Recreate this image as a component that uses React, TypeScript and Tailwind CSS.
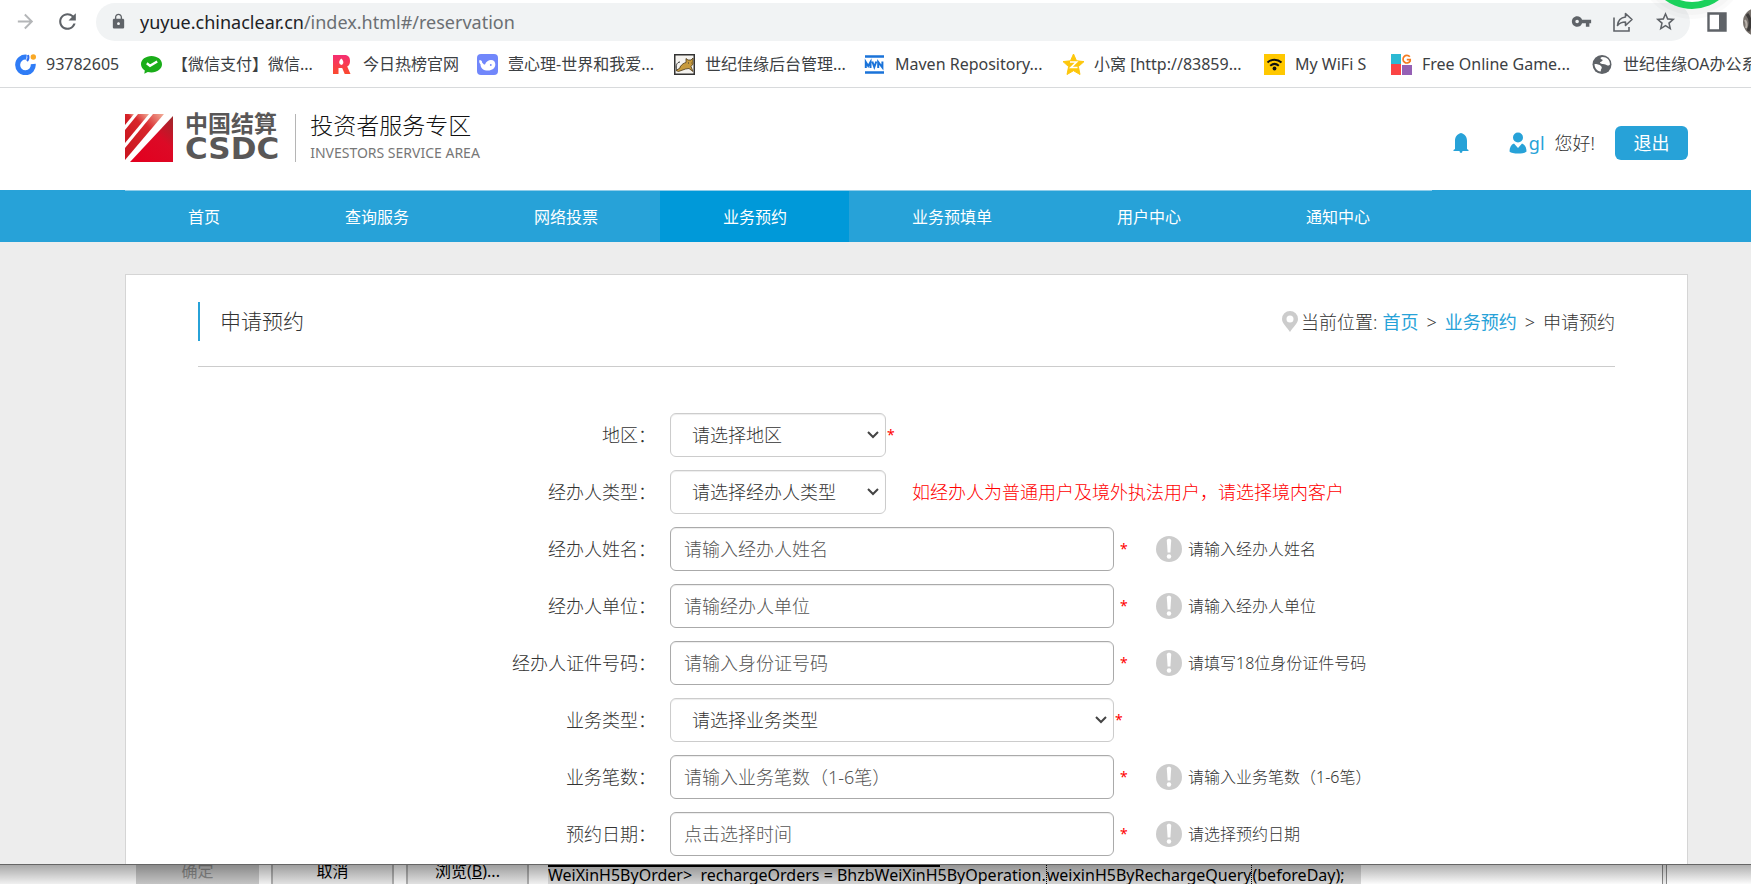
import type { ReactNode } from "react";
import { MdArrowForward, MdRefresh, MdLock, MdVpnKey, MdStarBorder, MdPublic } from "react-icons/md";

function Toolbar() {
  return (
    <div className="relative flex h-11 items-center overflow-hidden bg-white pb-px pl-3 text-[#5f6368]">
      <button type="button" aria-label="前进" className="flex w-[26px] justify-center text-[#b4b6b8]">
        <MdArrowForward size={23} />
      </button>
      <button type="button" aria-label="重新加载" className="ml-4 flex w-[26px] justify-center">
        <MdRefresh size={25} />
      </button>
      <div className="ml-4 flex h-[38px] flex-1 items-center rounded-full bg-[#f1f3f4] pl-[14px] pr-[13px]">
        <MdLock size={17} />
        <div className="ml-[13px] flex-1 text-lg leading-6 text-[#6b6f73]">
          <span className="text-[#202124]">yuyue.chinaclear.cn</span>/index.html#/reservation
        </div>
        <div className="flex items-center gap-5">
          <MdVpnKey size={21} />
          <svg width="22" height="22" viewBox="0 0 22 22" fill="none" stroke="currentColor" strokeWidth="1.6">
            <path d="M2 6.5V20h15v-4" />
            <path d="M13.5 2.5 20 8.5l-6.500 6v-3.500C10 11 7.500 12 5.500 14.500 6 9.500 9 6.500 13.500 6z" strokeLinejoin="round" />
          </svg>
          <MdStarBorder size={23} />
        </div>
      </div>
      <button type="button" aria-label="侧边栏" className="ml-[17px] mr-4">
        <svg width="20" height="20" viewBox="0 0 20 20">
          <path d="M1.500 1.500h17v17h-17z" fill="#fff" stroke="#5f6368" strokeWidth="2.400" />
          <path d="M12 1h7v18h-7z" fill="#5f6368" />
        </svg>
      </button>
      <svg width="8" height="28" viewBox="0 0 8 28">
        <circle cx="14" cy="14" r="14" fill="#77716c" />
        <path d="M4 6c4 5 4 11 1 17" stroke="#3c3a39" strokeWidth="3" fill="none" />
        <path d="M2 12c2 3 2 5 1 8" stroke="#b9b2ab" strokeWidth="2" fill="none" />
      </svg>
      <svg className="pointer-events-none absolute right-0 top-0" width="118" height="22" viewBox="0 0 118 22">
        <circle cx="59" cy="-36" r="55" fill="#000" opacity="0.020" />
        <circle cx="59" cy="-36" r="51" fill="#000" opacity="0.020" />
        <circle cx="59" cy="-36" r="45" fill="#1bd15c" />
        <circle cx="59" cy="-36" r="38" fill="#fff" />
      </svg>
    </div>
  );
}

const iconClass = "h-[21px] w-[21px] shrink-0";

const bookmarks: { label: string; width: string; icon: ReactNode }[] = [
  {
    label: "93782605",
    width: "w-[126px]",
    icon: (
      <svg className={iconClass} viewBox="0 0 21 21">
        <path d="M11.500 3.200A7.800 7.800 0 1 0 18.200 10" fill="none" stroke="#2f7cf6" strokeWidth="5" />
        <path d="M13 1a6 6 0 0 1-1 6" fill="none" stroke="#2f6df0" strokeWidth="2" />
        <circle cx="18.300" cy="3" r="2.700" fill="#f9a825" />
      </svg>
    ),
  },
  {
    label: "【微信支付】微信...",
    width: "w-[191px]",
    icon: (
      <svg className={iconClass} viewBox="0 0 21 21">
        <path d="M10.500 2C4.700 2 0 5.600 0 10.200c0 2.600 1.500 4.800 3.800 6.300L3.300 19.800l3.500-1.900c1.200.3 2.400.5 3.700.5 5.800 0 10.500-3.600 10.500-8.200S16.300 2 10.500 2z" fill="#1aad19" />
        <path d="M5.800 9.300 9 11.800l7.200-4.300" fill="none" stroke="#fff" strokeWidth="2.400" />
      </svg>
    ),
  },
  {
    label: "今日热榜官网",
    width: "w-[145px]",
    icon: (
      <svg className={iconClass} viewBox="0 0 21 21">
        <defs>
          <linearGradient id="hot" x1="0" y1="0" x2="0" y2="1">
            <stop offset="0" stopColor="#f52d72" />
            <stop offset="1" stopColor="#fb4a2e" />
          </linearGradient>
        </defs>
        <path d="M1 1h11.500C16.500 1 18 3.500 18 7c0 2.800-1 4.800-2.800 5.600L18.500 20h-5.800l-2.500-6H6.500v6H1z" fill="url(#hot)" />
        <path d="M9.200 4.500c2.600 2.200 3 5.500.3 6.500-3-.8-3-3.800-.3-6.500z" fill="#fff" />
      </svg>
    ),
  },
  {
    label: "壹心理-世界和我爱...",
    width: "w-[197px]",
    icon: (
      <svg className={iconClass} viewBox="0 0 21 21">
        <rect width="21" height="21" rx="4" fill="#7187fb" />
        <path d="M2.500 6c1.700 0 2.700 1 2.700 2.700C6.500 10 7 10.500 8 10.500 9 7.500 11.500 6 14 6c3 0 4.300 2 4.300 4.500 0 3.800-3.300 6-7.300 6-4.500 0-7.500-2.200-7.500-6.300C2.200 9 2 7.500 2.500 6z" fill="#fff" />
        <circle cx="13.800" cy="11" r="0.900" fill="#7187fb" />
      </svg>
    ),
  },
  {
    label: "世纪佳缘后台管理...",
    width: "w-[190px]",
    icon: (
      <svg className={iconClass} viewBox="0 0 21 21">
        <rect x="0.750" y="0.750" width="19.500" height="19.500" fill="#f5f3ef" stroke="#333" strokeWidth="1.500" />
        <path d="M6 13c2-3 4-4 6-4.500V4.500l2 1.500h3l2-2v6l-2 2.500 2 5-4-3-3.500.5-7 2.500-2.500-1 4-2.500z" fill="#c79a3c" stroke="#4b3a1c" strokeWidth="0.800" />
        <path d="M3 16c-2-4 0-8 3-8M14 9h1M17 9h.5" fill="none" stroke="#333" />
      </svg>
    ),
  },
  {
    label: "Maven Repository...",
    width: "w-[199px]",
    icon: (
      <svg className={iconClass} viewBox="0 0 21 21" fill="none" stroke="#1a73d9">
        <path d="M1 2.500h19M1 18.500h19" strokeWidth="2.400" />
        <path d="M1.800 14V8l2.400 4L6.500 8v6M8.300 7.500l2 5.500 2-5.500M14.200 14V8l4.200 5.500V7.500" strokeWidth="2" />
      </svg>
    ),
  },
  {
    label: "小窝 [http://83859...",
    width: "w-[201px]",
    icon: (
      <svg className={iconClass} viewBox="0 0 21 21">
        <path d="m10.500 0 3 6.800 7.500.8-5.600 5 1.600 7.900-6.500-3.800L4 20.500l1.600-7.900L0 7.600l7.500-.8z" fill="#fdc70c" stroke="#fdc70c" strokeLinejoin="round" />
        <path d="M7 8h6.500L8 13.500h6.500" fill="none" stroke="#fff" strokeWidth="1.700" />
      </svg>
    ),
  },
  {
    label: "My WiFi S",
    width: "w-[127px]",
    icon: (
      <svg className={iconClass} viewBox="0 0 21 21">
        <rect width="21" height="21" fill="#ffc800" />
        <path d="M3.500 8.500c4-3.700 10-3.700 14 0M6.200 11.800c2.600-2.300 6-2.300 8.600 0" fill="none" stroke="#111" strokeWidth="2" />
        <circle cx="10.500" cy="14.500" r="1.900" fill="#111" />
      </svg>
    ),
  },
  {
    label: "Free Online Game...",
    width: "w-[201px]",
    icon: (
      <svg className={iconClass} viewBox="0 0 21 21">
        <path d="M0 0h10v10H0z" fill="#2cb9d3" />
        <path d="M0 10h10v11H0z" fill="#fb4444" />
        <path d="M11 11h10v10H11z" fill="#9560b5" />
        <path d="M18.800 2.800a3.800 3.800 0 1 0 .4 4.200V5.600h-3.400" fill="none" stroke="#f47b20" strokeWidth="1.700" />
      </svg>
    ),
  },
  {
    label: "世纪佳缘OA办公系统",
    width: "w-[200px]",
    icon: (
      <svg className={iconClass} viewBox="0 0 21 21">
        <circle cx="10" cy="10.500" r="9.500" fill="#5f6368" />
        <path d="M10.500 3c-3 .5-2 2-.5 2.500s0 2-1.500 2.500.5 2 2.500 2 3 1 4.500 1.500c1.500.3 2-.5 2.500-1C18 6 15 3 10.500 3z" fill="#fff" />
        <path d="M2.500 10c2.500 0 5 .5 6.500 2s.5 2.500 0 3.500.5 1.500-.5 2C5 17 2.500 14 2.500 10z" fill="#fff" />
      </svg>
    ),
  },
];

function BookmarkBar() {
  return (
    <div className="flex h-11 overflow-hidden border-b border-[#d8dadc] bg-white pl-[15px]">
      {bookmarks.map((b) => (
        <a key={b.label} href="#" className={"flex h-10 shrink-0 items-center gap-[10px] whitespace-nowrap text-base text-[#3c4043] " + b.width}>
          {b.icon}
          <span>{b.label}</span>
        </a>
      ))}
    </div>
  );
}

function SiteHeader() {
  return (
    <header className="flex h-[102px] items-center justify-between bg-white pl-[125px] pr-[63px]">
      <div className="flex items-center pb-[3px]">
        <svg width="48" height="48" viewBox="0 0 48 48" role="img" aria-label="中国结算">
          <defs>
            <linearGradient id="markMain" x1="0.200" y1="1" x2="1" y2="0">
              <stop offset="0" stopColor="#e2001f" />
              <stop offset="0.550" stopColor="#dc0a26" />
              <stop offset="1" stopColor="#9c2a2c" />
            </linearGradient>
            <linearGradient id="markBand" x1="0" y1="1" x2="1" y2="0">
              <stop offset="0" stopColor="#c9151f" />
              <stop offset="0.650" stopColor="#d8262b" />
              <stop offset="1" stopColor="#f2b09a" />
            </linearGradient>
          </defs>
          <path d="M0 0h9L0 11z" fill="url(#markBand)" />
          <path d="M13 0h11L0 29V16z" fill="url(#markBand)" />
          <path d="M28 0h11L0 46V34z" fill="url(#markBand)" />
          <path d="M48 2v46H5z" fill="url(#markMain)" />
        </svg>
        <div className="ml-3 flex h-[52px] flex-col text-[#595757]">
          <span className="font-['Noto_Sans_CJK_SC',sans-serif] text-[23px] font-bold leading-5">中国结算</span>
          <span className="font-['DejaVu_Sans',sans-serif] text-[31px] font-bold leading-8">CSDC</span>
        </div>
        <div className="ml-4 h-12 w-px bg-[#b5b5b5]" />
        <div className="ml-[14px] flex h-[50px] flex-col">
          <span className="text-[23px] font-light leading-6 text-[#111]">投资者服务专区</span>
          <span className="text-sm leading-8 text-[#777]">INVESTORS SERVICE AREA</span>
        </div>
      </div>
      <div className="flex items-center pt-2 text-lg font-light">
        <button type="button" aria-label="通知">
          <svg width="16" height="20" viewBox="0 0 16 20" fill="#27a2d8">
            <path d="M8 0C3.800 1.200 2 4 2 8v8L.5 17v1H6.500l.5 1.700h2l.5-1.700h6v-1L14 16V8c0-4-1.800-6.800-6-8z" />
          </svg>
        </button>
        <svg className="ml-10" width="18" height="22" viewBox="0 0 18 22" fill="#27a2d8">
          <circle cx="9" cy="5.500" r="5" />
          <path d="M5 11.500 9 16l4-4.500c3 1 4.500 4 4.500 8C15 22.300 3 22.300.5 19.500c0-4 1.500-7 4.500-8z" />
        </svg>
        <a href="#" className="ml-[2px] font-normal text-[#27a2d8]">gl</a>
        <span className="ml-[10px] text-[#333]">您好!</span>
        <button type="button" className="ml-5 h-[34px] w-[73px] rounded-md bg-[#27a2d8] font-normal text-white">退出</button>
      </div>
    </header>
  );
}

const navItems = ["首页", "查询服务", "网络投票", "业务预约", "业务预填单", "用户中心", "通知中心"];

function Nav() {
  return (
    <nav className="flex h-[52px] bg-[#27a2d8] pl-[125px]">
      <div className="flex border-t border-[#8fcdea]">
        {navItems.map((item) => (
          <a
            key={item}
            href="#"
            className={
              "flex items-center whitespace-nowrap border-l px-[62px] text-base text-white " +
              (item === "业务预约" ? "border-[#0099d9] bg-[#0099d9]" : "border-transparent")
            }
          >
            {item}
          </a>
        ))}
      </div>
    </nav>
  );
}

type Field = {
  id: string;
  label: string;
  kind: "select" | "input";
  text: string;
  narrow?: boolean;
  required?: boolean;
  note?: string;
  hint?: string;
};

const fields: Field[] = [
  { id: "area", label: "地区：", kind: "select", text: "请选择地区", narrow: true, required: true },
  { id: "agentType", label: "经办人类型：", kind: "select", text: "请选择经办人类型", narrow: true, note: "如经办人为普通用户及境外执法用户，请选择境内客户" },
  { id: "agentName", label: "经办人姓名：", kind: "input", text: "请输入经办人姓名", required: true, hint: "请输入经办人姓名" },
  { id: "agentUnit", label: "经办人单位：", kind: "input", text: "请输经办人单位", required: true, hint: "请输入经办人单位" },
  { id: "agentCert", label: "经办人证件号码：", kind: "input", text: "请输入身份证号码", required: true, hint: "请填写18位身份证件号码" },
  { id: "bizType", label: "业务类型：", kind: "select", text: "请选择业务类型", required: true },
  { id: "bizCount", label: "业务笔数：", kind: "input", text: "请输入业务笔数（1-6笔）", required: true, hint: "请输入业务笔数（1-6笔）" },
  { id: "date", label: "预约日期：", kind: "input", text: "点击选择时间", required: true, hint: "请选择预约日期" },
];

function FieldRow({ field }: { field: Field }) {
  return (
    <div className="flex h-11 items-center">
      <label htmlFor={field.id} className="w-[458px] shrink-0 text-right text-lg text-[#333]">
        {field.label}
      </label>
      {field.kind === "select" ? (
        <div className={"relative ml-[14px] shrink-0 " + (field.narrow ? "w-[216px]" : "w-[444px]")}>
          <select
            id={field.id}
            className="h-11 w-full appearance-none rounded-md border border-[#ccc] bg-white pl-[21px] pr-6 text-lg font-light text-[#333] shadow-[inset_0_1px_1px_rgba(0,0,0,0.075)]"
          >
            <option>{field.text}</option>
          </select>
          <svg className="pointer-events-none absolute right-[7px] top-[18px]" width="12" height="8" viewBox="0 0 12 8" fill="none" stroke="#444" strokeWidth="2">
            <path d="m1 1 5 5 5-5" />
          </svg>
        </div>
      ) : (
        <input
          id={field.id}
          type="text"
          placeholder={field.text}
          className="ml-[14px] h-11 w-[444px] shrink-0 rounded-md border border-[#aaa] bg-white px-[13px] text-lg font-light text-[#333] shadow-[inset_0_1px_1px_rgba(0,0,0,0.075)] placeholder:text-[#555]"
        />
      )}
      {field.required && (
        <span className={"w-9 shrink-0 text-sm font-normal leading-7 text-[#f00] " + (field.kind === "select" ? "pl-px" : "pl-[6px]")}>*</span>
      )}
      {field.note && <span className="ml-[26px] whitespace-nowrap text-lg text-[#f00]">{field.note}</span>}
      {field.hint && (
        <span className="ml-[6px] flex items-center gap-[6px] whitespace-nowrap text-base text-[#333]">
          <svg width="26" height="26" viewBox="0 0 26 26">
            <circle cx="13" cy="13" r="13" fill="#ccc" />
            <path d="M10.800 4.500c0-2.500 4.400-2.500 4.400 0l-.8 12h-2.800z" fill="#fff" />
            <circle cx="13" cy="20.500" r="2.200" fill="#fff" />
          </svg>
          {field.hint}
        </span>
      )}
    </div>
  );
}

function ReservationCard() {
  return (
    <main className="flex flex-1 flex-col bg-[#ededed] pl-[125px] pr-[63px] pt-8 font-light">
      <section className="flex-1 border border-b-0 border-[#d5d5d5] bg-white px-[72px]">
        <div className="flex h-[92px] items-center justify-between border-b border-[#ccc] pt-[2px]">
          <h1 className="flex h-[39px] items-center border-l-2 border-[#27a2d8] pl-5 text-[21px] text-[#333]">申请预约</h1>
          <div className="flex items-center text-lg text-[#333]">
            <svg className="mr-[3px]" width="16" height="21" viewBox="0 0 16 21">
              <path d="M8 0a8 8 0 0 1 8 8c0 4.500-5 8-8 13C5 16 0 12.500 0 8a8 8 0 0 1 8-8zm0 4.500a3.500 3.500 0 1 0 0 7 3.500 3.500 0 0 0 0-7z" fill="#ccc" />
            </svg>
            <span>当前位置:</span>
            <a href="#" className="ml-[5px] font-normal text-[#27a2d8]">首页</a>
            <span className="mx-2">&gt;</span>
            <a href="#" className="font-normal text-[#27a2d8]">业务预约</a>
            <span className="mx-2">&gt;</span>
            <span>申请预约</span>
          </div>
        </div>
        <form className="flex flex-col gap-[13px] pb-2 pt-[46px]">
          {fields.map((f) => (
            <FieldRow key={f.id} field={f} />
          ))}
        </form>
      </section>
    </main>
  );
}

function BackgroundWindow() {
  return (
    <footer className="relative flex h-5 overflow-hidden border-t border-[#666] bg-[#fbfbfb] text-base text-black">
      <div className="flex w-[548px] shrink-0 gap-3 bg-[#f0f0f0] pl-[136px]">
        <button type="button" disabled className="h-5 w-[123px] bg-[#c4c4c4] pb-2 leading-3 text-[#888]">确定</button>
        <button type="button" className="h-5 w-[123px] border-x-2 border-[#aaa] bg-[#e1e1e1] pb-2 leading-3">取消</button>
        <button type="button" className="h-5 w-[123px] border-x-2 border-[#aaa] bg-[#e1e1e1] pb-2 leading-3">
          浏览(<u>B</u>)...
        </button>
      </div>
      <div className="h-5 w-[813px] shrink-0 overflow-hidden whitespace-pre bg-[#d4d4d4] leading-5">
        {"WeiXinH5ByOrder>  rechargeOrders = BhzbWeiXinH5ByOperation."}
        <span className="border-x border-dotted border-black">weixinH5ByRechargeQuery</span>
        {"(beforeDay);"}
      </div>
      <div className="ml-[301px] h-5 w-[5px] shrink-0 border-x border-[#888] bg-[#eee]" />
      <div className="pointer-events-none absolute inset-0 bg-gradient-to-b from-black/30 to-transparent" />
      <div className="absolute left-[548px] top-0 h-[2px] w-[392px] bg-black" />
    </footer>
  );
}

export default function App() {
  return (
    <div className="flex min-h-screen flex-col overflow-hidden font-['Noto_Sans','Noto_Sans_CJK_SC',sans-serif]">
      <Toolbar />
      <BookmarkBar />
      <SiteHeader />
      <Nav />
      <ReservationCard />
      <BackgroundWindow />
    </div>
  );
}
